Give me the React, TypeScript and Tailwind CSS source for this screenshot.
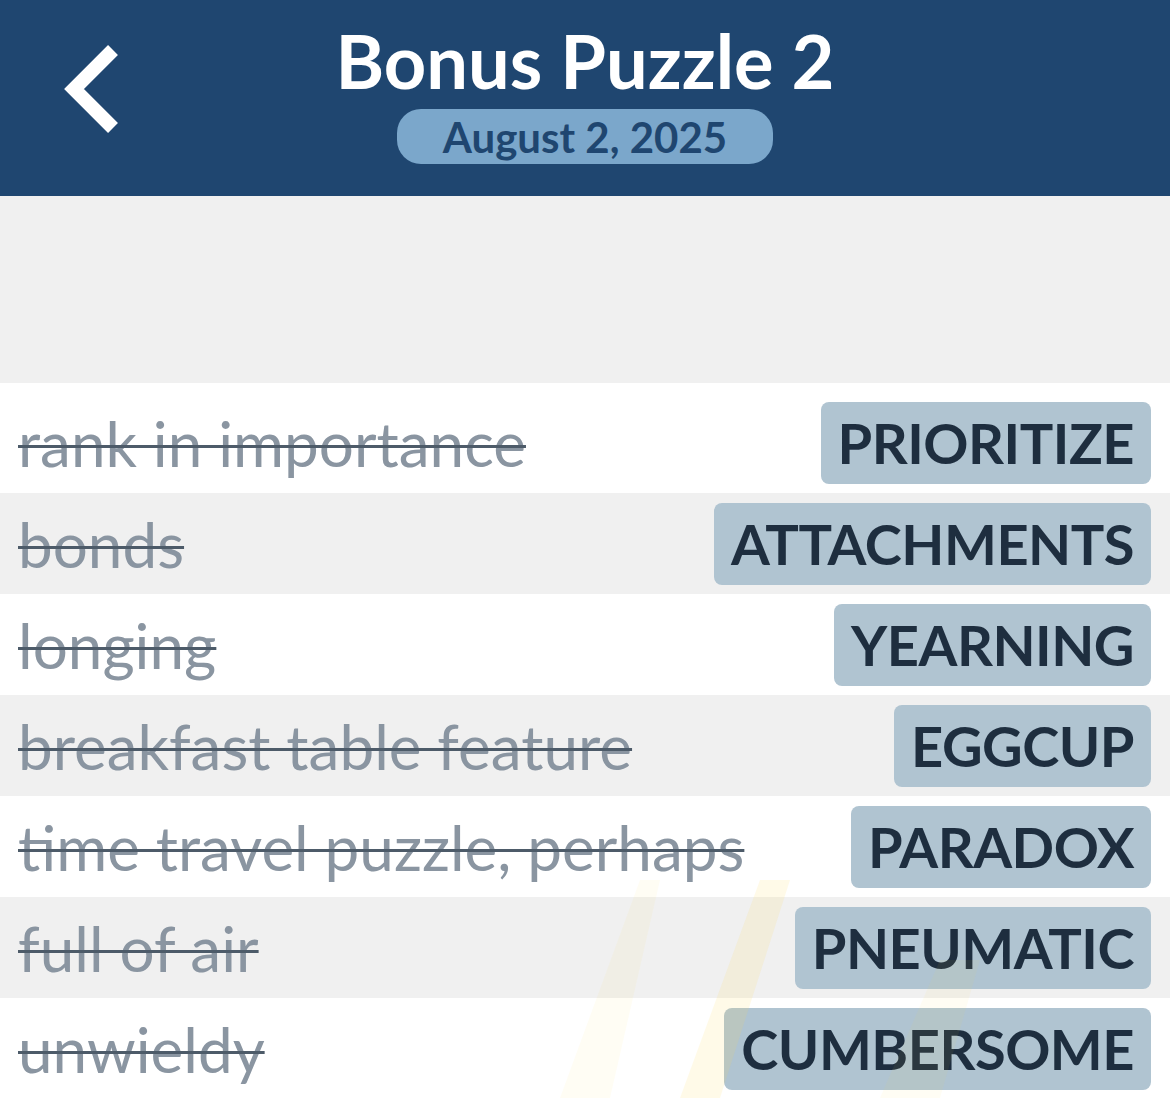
import React from "react";

const rows: { clue: string; answer: string }[] = [
  { clue: "rank in importance", answer: "PRIORITIZE" },
  { clue: "bonds", answer: "ATTACHMENTS" },
  { clue: "longing", answer: "YEARNING" },
  { clue: "breakfast table feature", answer: "EGGCUP" },
  { clue: "time travel puzzle, perhaps", answer: "PARADOX" },
  { clue: "full of air", answer: "PNEUMATIC" },
  { clue: "unwieldy", answer: "CUMBERSOME" },
];

export default function App() {
  return (
    <div
      className="relative w-[1170px] h-[1098px] overflow-hidden bg-white"
      style={{ fontFamily: "Lato, 'Noto Sans', sans-serif" }}
    >
      <header className="relative h-[196px] bg-[#1f4670] flex flex-col items-center">
        <button className="absolute left-[58px] top-[42px] w-[70px] h-[94px] flex items-center justify-center">
          <svg width="70" height="94" viewBox="0 0 70 94">
            <polyline
              points="55,8 16,47 55,86"
              fill="none"
              stroke="white"
              strokeWidth="14"
              strokeLinecap="butt"
              strokeLinejoin="miter"
            />
          </svg>
        </button>
        <h1 className="mt-[20px] text-white font-bold text-[74px] leading-[82px]">
          Bonus Puzzle 2
        </h1>
        <div className="mt-[7px] h-[55px] w-[376px] rounded-[24px] bg-[#7ba7cb] flex items-center justify-center">
          <span className="text-[#1f4670] font-bold text-[42px] leading-none">August 2, 2025</span>
        </div>
      </header>
      <div className="h-[187px] bg-[#f0f0f0]" />
      <div className="pt-[9px] bg-white">
        {rows.map((r, i) => (
          <div
            key={r.answer}
            className={`h-[101px] flex items-center justify-between pl-[18px] pr-[19px] ${
              i % 2 === 1 ? "bg-[#f0f0f0]" : "bg-white"
            }`}
          >
            <span className="text-[#8a95a1] text-[62px] leading-none line-through decoration-[#4d5b69] decoration-[3px]">
              {r.clue}
            </span>
            <span className="h-[82px] px-[17px] rounded-[8px] bg-[#b0c4d1] flex items-center text-[#1e2e3f] font-bold text-[56px] tracking-[-0.5px] leading-none">
              {r.answer}
            </span>
          </div>
        ))}
      </div>
      <svg
        className="absolute left-0 top-0 pointer-events-none"
        width="1170"
        height="1098"
        viewBox="0 0 1170 1098"
      >
        <polygon points="560,1098 610,1098 660,880 640,880" fill="#ffd54a" opacity="0.06" />
        <polygon points="680,1098 720,1098 790,880 760,880" fill="#ffd54a" opacity="0.13" />
        <polygon points="880,1098 940,1098 980,960 940,960" fill="#ffd54a" opacity="0.06" />
      </svg>
    </div>
  );
}
